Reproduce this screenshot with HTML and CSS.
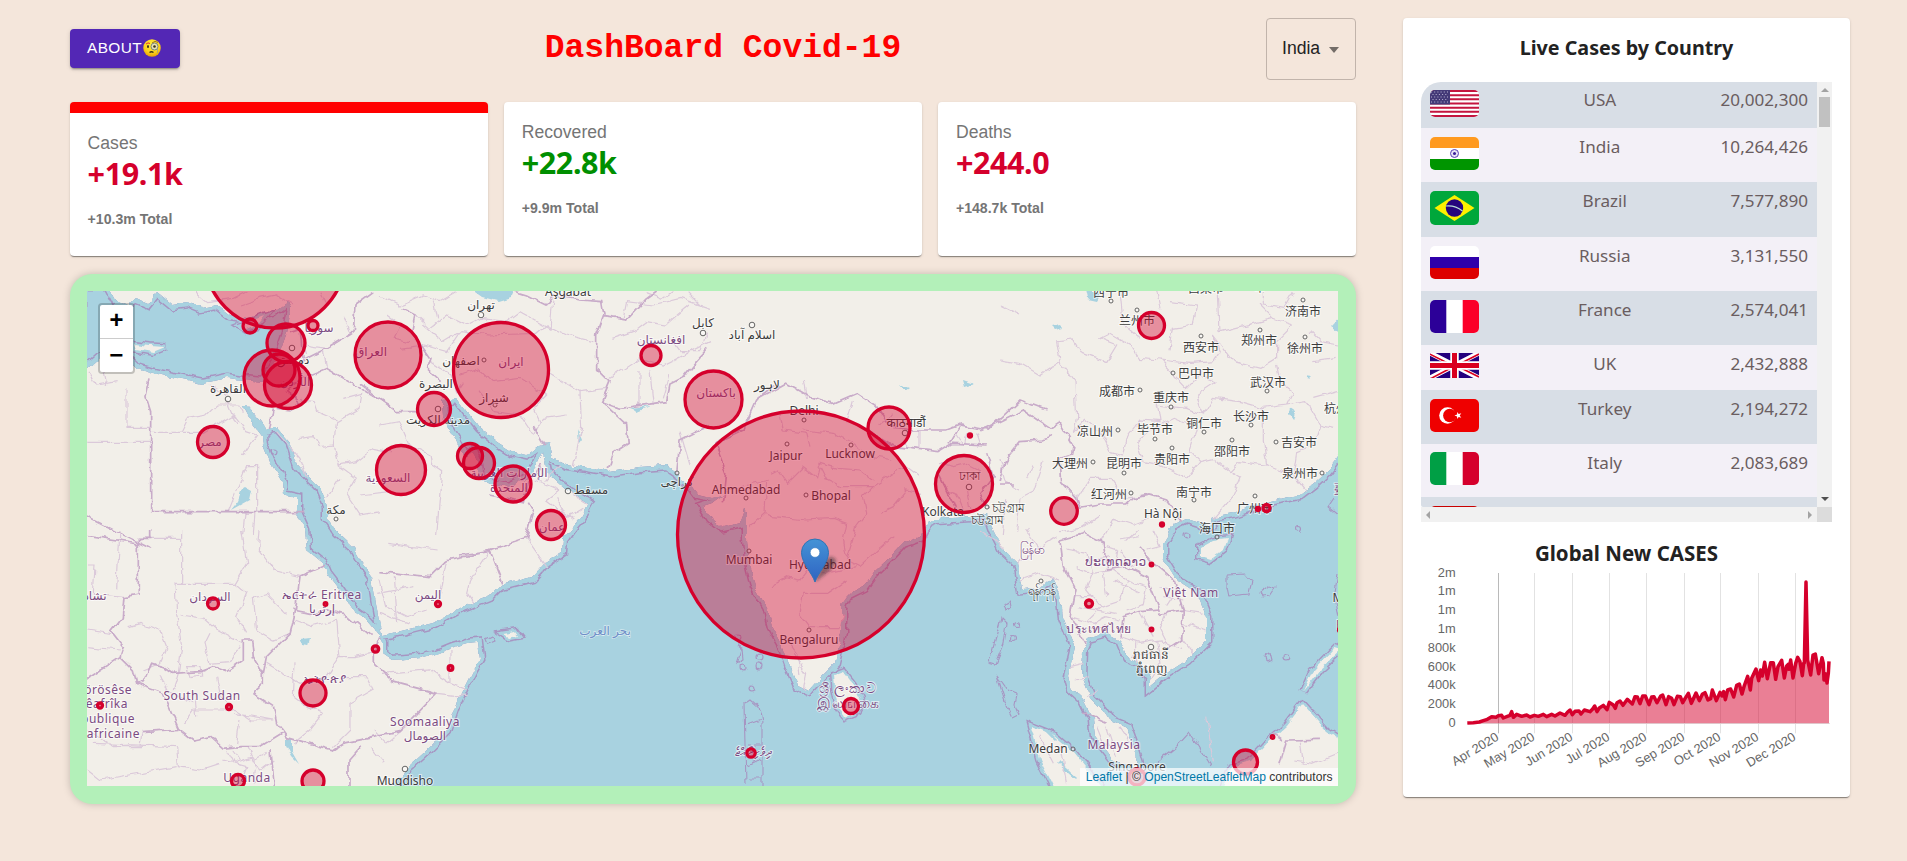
FILE: index.html
```html
<!DOCTYPE html>
<html lang="en">
<head>
<meta charset="utf-8">
<title>DashBoard Covid-19</title>
<link rel="stylesheet" href="styles.css">
</head>
<body>
<div class="app">
  <main class="main">
    <header class="header">
      <button class="about">ABOUT<svg class="emoji" viewBox="0 0 36 36"><defs><radialGradient id="face" cx=".5" cy=".3" r=".75"><stop offset="0" stop-color="#ffee3a"/><stop offset=".6" stop-color="#fcd21c"/><stop offset="1" stop-color="#e59600"/></radialGradient></defs><circle cx="18" cy="18" r="17.5" fill="url(#face)"/><path d="M6 10q4-4 8-1" fill="none" stroke="#e5322d" stroke-width="2"/><path d="M18 8q6-6 12-1" fill="none" stroke="#8a5a10" stroke-width="1.6"/><ellipse cx="10" cy="15" rx="2" ry="3" fill="#3b3018"/><circle cx="23" cy="15" r="7" fill="#e9e4b0" stroke="#6c7a80" stroke-width="1.8"/><circle cx="23" cy="15" r="2.6" fill="#3b3018"/><path d="M29 18v10" stroke="#8b97a0" stroke-width="1.3"/><path d="M13 27q4-3 8 0" fill="none" stroke="#3b3018" stroke-width="2.6"/></svg></button>
      <h1 class="title">DashBoard Covid-19</h1>
      <div class="select"><span>India</span><i class="caret"></i></div>
    </header>
    <section class="stats">
      <article class="stat stat-active"><p class="stat-name">Cases</p><h2 class="stat-value">+19.1k</h2><p class="stat-total">+10.3m Total</p></article>
      <article class="stat"><p class="stat-name">Recovered</p><h2 class="stat-value good">+22.8k</h2><p class="stat-total">+9.9m Total</p></article>
      <article class="stat"><p class="stat-name">Deaths</p><h2 class="stat-value">+244.0</h2><p class="stat-total">+148.7k Total</p></article>
    </section>
    <section class="map-card">
      <div class="map">
        <svg class="map-svg" viewBox="87 291 1251 495">
          <defs>
            <filter id="rough" filterUnits="userSpaceOnUse" x="60" y="270" width="1300" height="540"><feTurbulence type="fractalNoise" baseFrequency=".09" numOctaves="2" seed="4"/><feDisplacementMap in="SourceGraphic" scale="7" xChannelSelector="R" yChannelSelector="G"/></filter>
            <path id="ocean" d="M393 786L407 768 427 750 447 730 455 707 463 690 473 670 480 658 478 642 467 643 453 647 433 655 420 658 393 660 383 653 383 642 378 633 367 620 353 610 340 590 327 573 323 563 307 550 305 530 297 512 297 498 283 495 282 482 270 462 263 445 262 435 252 422 243 405 247 405 260 420 267 430 271 428 278 428 290 442 298 465 310 478 320 488 327 505 327 518 337 532 353 547 360 560 372 577 375 597 380 627 382 635 393 633 413 628 433 623 453 612 460 608 492 595 502 585 532 577 545 563 562 552 563 540 570 530 580 518 588 503 568 491 547 472 543 452 537 465 527 478 507 488 490 484 480 478 478 465 473 452 467 457 460 450 455 438 443 418 442 400 457 398 467 412 480 428 497 442 513 452 527 455 540 445 548 443 552 458 567 465 587 468 610 472 640 467 667 465 677 472 682 482 691 486 697 494 712 497 723 495 712 503 703 506 710 517 722 527 740 523 744 508 747 513 747 540 750 567 755 587 767 607 772 627 783 647 790 667 798 686 808 691 817 681 835 663 842 633 842 607 847 595 863 587 873 573 890 557 903 543 920 537 927 523 937 519 970 517 987 513 993 530 1003 550 1017 563 1022 590 1040 588 1052 577 1060 593 1063 617 1075 647 1068 677 1072 690 1083 700 1093 720 1095 737 1113 760 1127 767 1140 767 1133 743 1127 727 1110 720 1103 710 1090 697 1082 677 1083 650 1088 638 1107 633 1120 640 1127 657 1140 663 1150 677 1150 687 1167 673 1187 660 1207 640 1207 617 1197 593 1177 580 1163 557 1163 543 1172 528 1173 525 1187 518 1200 522 1205 528 1212 526 1211 517 1233 513 1257 505 1283 498 1300 495 1313 485 1327 472 1335 462 1350 440V800H393z"/>
            <path id="med" d="M80 285H108L117 302 128 306 136 298 148 303 157 292 173 305 188 303 200 308 217 305 230 315 247 318 273 312 287 302 291 308 287 332 280 352 273 368 263 382 243 380 227 378 203 383 177 378 153 373 137 368 118 350 100 357 88 368H80z"/>
            <clipPath id="sea"><use href="#ocean"/><use href="#med"/></clipPath>
          </defs>
          <rect x="87" y="291" width="1251" height="495" fill="#f2efe9"/>
          <g filter="url(#rough)">
            <g fill="#a8d2e0"><use href="#ocean"/><use href="#med"/><path d="M465 285H516L511 297 498 301 482 297zM1345 312v24l-14-9zM1085 290l15 4-4 7-9-2zM1052 326l9-2 3 4-8 2zM1290 408l6 4-2 8-5-7zM1305 375l6 1-3 3zM244 486l7 4-2 10-18 10 8-10zM301 640l8-1-2 8-5-1zM286 738h5v14l7 12-7-7-5-10zM962 380l12 4-10 3zM900 384l10 4-4 3zM578 430l4 10-3 4zM630 408l20-2-12 5z"/></g>
            <g clip-path="url(#sea)" fill="none"><g stroke="#a795c2" stroke-width="11"><use href="#ocean"/><use href="#med"/></g><g stroke="#a8d2e0" stroke-width="8"><use href="#ocean"/><use href="#med"/></g></g>
            <g fill="#a8d2e0" stroke="#a795c2" stroke-width="8"><path id="isl" d="M1200 547L1213 540 1227 538 1223 550 1210 560 1200 557zM834 674L842 671 853 685 862 703 855 714 845 718 839 710 835 690zM1031 726L1054 735 1074 752 1090 772 1104 790H1055L1040 760zM1303 704L1326 730 1340 739V790H1222L1230 768 1250 762 1270 740 1287 725zM1342 650L1320 670 1303 692 1312 672 1335 648zM134 344l16 2 15 1-12 5-17-3zM240 326l8-3 16-6-8 10-10 3zM503 634l13-2 3 4-10 2z"/></g>
            <use href="#isl" fill="#a8d2e0" stroke="#a8d2e0" stroke-width="5.2"/><use href="#isl" fill="#f2efe9"/>
            <path d="M1046 730l10 10M1058 762l18 16M1110 697l4 8" stroke="#a8d2e0" stroke-width="3"/>
            <g class="limits">
              <path d="M995 640l6-22 6 6-3 20-8 20-7-2zM997 676l10 14 10 4-2 10 4 10-6 3-8-16zM1005 604l5-3 1 6-4 3zM1228 575l16-1 7 8-3 12-18 2-2-10zM1260 592l10-7 6 2-6 9-8 1zM1155 763l20-16 14-15 9 12 13 22M745 704l6-4 7 6 4 16v65M744 704l2 80M747 725l13-5M747 745h14M747 765l13-6M749 778h12M736 646l6 3 1 10-6 4 4-13zM486 638l6-3 3 5-7 3zM1265 655l4-3 2 8-5 2zM1334 498l-6 9 12 10M1338 575l-4 22 5 24"/>
              <circle cx="1017" cy="624" r="2.5"/><circle cx="1012" cy="639" r="2.5"/><circle cx="742" cy="667" r="3"/><circle cx="759" cy="657" r="3"/><circle cx="759" cy="666" r="3"/><circle cx="751" cy="689" r="3"/><circle cx="1287" cy="658" r="3"/><circle cx="1186" cy="536" r="3"/><circle cx="1299" cy="529" r="2.5"/><circle cx="274" cy="452" r="3"/><circle cx="738" cy="638" r="3"/>
            </g>
            <g class="regions">
              <g transform="translate(60 265) scale(.3333)"><path d="M82 532H270M198 370V487H270M272 502H430L520 450 560 500 590 510 550 570M590 600V738M590 602H560L505 740M555 740L548 810M585 740L580 810M130 310L140 360M90 320L110 360 170 350M360 500L380 460 440 450 470 420 540 420 550 440M450 360L500 390 540 380M500 410L530 480M790 255L800 310M740 270L730 240 800 250M850 150L870 200M715 520L760 515 780 545 820 540 835 600 890 590 940 550 990 560M835 600L890 640 860 690 900 750 960 740M820 540L830 470 900 430 905 385 850 400M720 400L760 410 770 440 830 465M650 500L720 580 740 640M900 690L990 680M800 700L840 640M400 78L440 110 520 100 560 80M540 120L600 100 650 90 700 120M780 80L800 130"/></g>
              <g transform="translate(380 265) scale(.3333)"><path d="M0 90L60 120 130 90 180 110 230 80M105 150L150 190 200 150 260 180 300 160 380 170 420 140 510 190 520 90M60 250L130 240 200 260 240 200 330 210 470 205 500 180 560 210 640 230M240 330L300 310 340 350 420 340 500 390 460 430 480 470M510 325L600 380 605 490 580 600M300 380L340 440 420 450 460 510 490 460 560 450M600 380L680 370M150 290L210 330 230 380 250 350M690 340L780 280 850 300 990 230M780 320V420M810 320L820 420M700 220L760 200 800 170 860 180 930 120M870 330L850 400M730 160L740 110 820 120 900 100 990 130M900 500L930 600M0 480L60 470 90 540 150 570 155 600 185 620 170 810M530 700L560 760 610 730M500 650L540 600M20 150L60 180 40 220 90 230M160 110L170 160M130 180L190 230 240 200M870 220L900 260 960 260 980 200M800 80L850 100 880 78M920 80L960 120"/></g>
              <g transform="translate(660 380) scale(.3333)"><path d="M360 100L370 150 440 160 450 200M330 280L350 270 380 310 430 260 470 290 480 250 530 265 600 270 640 300M320 400L340 410 440 420 520 415 560 430 550 480 560 530M320 300L315 400 270 440M480 260L500 300 540 320 640 320 700 280 740 260 780 290M640 320L610 350 620 400 590 440 560 540 600 560 700 470M330 620L380 590 420 600 450 560 500 580 590 560M430 640L420 700 450 740 540 740 550 700M430 640L500 640 560 600M380 780L410 820 420 880M330 300L200 330M430 150L520 160 580 190 640 230 700 240M780 340L740 330 700 380 660 400M840 250L880 260 920 250 960 270M860 330L890 340 910 390M920 330L930 390M1020 240L1040 310 1080 330M700 100L660 130M430 0L440 60M580 60L560 130M740 150V210M780 150V205M890 165l20 30M920 160l-5 30M950 160l10 30"/></g>
              <g transform="translate(1000 265) scale(.3333)"><path d="M180 290L120 330 60 295 0 285M180 290L170 230 220 225 240 260 320 290 350 240 300 220 330 205 390 240 420 280 480 285 570 295 640 290 660 260 640 210 700 290 780 310 830 280 830 230 880 180 820 160 780 120M660 200L820 160M655 78L660 200M180 290L225 350 230 460 220 500 250 460 300 500 330 560 370 570 385 510 420 465 480 470 470 400M470 420L560 430 610 450 590 390 650 350 600 330 560 370 480 285M610 450L640 400 720 410 790 430 860 420 880 380 840 350 830 300M860 420L920 410 960 480 1000 490M960 480L940 540 890 560 880 630 920 680M790 430L790 520 800 600 720 590 690 620 640 580 600 590 570 560 590 490 520 460 480 480 410 530 430 590 480 600 560 640 600 590M690 620L720 640 700 690 640 760M230 700L270 640 330 640 370 700 460 690M360 78L370 180 420 220M510 110L590 120 580 180 520 190 510 250M790 78V120L850 130 880 78M930 200L960 230 1014 240M940 290L1010 280M940 400L1014 380M0 120L60 150M130 590L100 680 60 700 50 800M20 700L10 810M100 600L80 640M180 800L240 790 300 750M300 830L340 760 400 780 450 760M380 830L420 790M800 600L880 630M470 78L480 130"/></g>
              <g transform="translate(60 530) scale(.3333)"><path d="M365 0V160M235 25H362M345 160H525L560 100 545 0M345 160L350 250 365 350 355 430M365 255L430 265 470 300 545 340M525 160L560 190 530 260 560 310M600 0L595 60 640 120 720 140M580 200L620 190 680 250M580 200L590 300 640 330 690 310M450 310L435 340 450 400 510 395 540 350M705 270L760 290 830 270 840 380 800 440 720 460 620 400M840 380L880 380 930 370M840 440L920 440 940 480 870 520 870 600 820 650M705 400L700 500 740 530 790 550 750 600 700 640M300 430L320 480 400 520M400 540L370 580M470 440L480 490 510 530 570 570 640 570M400 540L480 540 520 540M540 570L530 640M520 550L640 570M405 490L410 560M82 600L160 650 240 650 245 610M100 640L350 650 355 710 420 720 480 700M82 720L120 750 350 710M355 430L340 480M200 290L240 280 300 300 320 350 300 400 250 420M82 300L150 310M82 350L180 360M180 0L170 180M82 105H105L100 190 200 200M1160 90L1140 200M985 40L1130 60M960 150L980 230 1040 260 1100 240M955 190L1060 170M1000 140L1010 280M960 250L1050 280M940 600L980 640 1040 590M930 650L970 700M1130 490L1220 500M1170 360V460L1110 420 960 430M1170 460L1220 480M500 660L520 700 580 680 600 720 640 690M490 690L560 710 540 760M520 660L540 690M560 650L580 690 620 670M590 700L580 760M380 410h40l5 25-35 5z"/></g>
              <g transform="translate(960 530) scale(.3333)"><path d="M320 60L380 70 400 130 380 180 420 230 380 270M350 110L400 130 460 120 500 150 480 210 420 230M460 120L470 60 440 50M500 150L560 170 550 220 500 240M480 60L520 110M560 60L600 50 580 0M540 20L480 30M600 170L640 180M610 200L670 210M660 240L730 250M670 280L740 300M660 320L700 370M620 250L600 300 620 340M480 320L540 340 600 330 660 360M530 340V400M590 330L600 400 570 450M510 380L570 370M330 260L400 280 440 260 480 270M380 300L440 290M330 410L370 400M350 450L390 440M380 500L410 480M410 590L430 640 460 650M440 590L470 680M480 590L520 650M170 100L230 60 290 20M200 0L240 60M180 150L240 130 300 150M60 0L130 50M1000 690L1060 700 1134 670M1020 630L1030 700M740 560L760 700M240 620L280 700M300 650L320 760M390 90L450 80M430 130L440 200M340 200L400 200M350 230L470 250M460 150L540 190M620 230L640 200M540 250L580 320"/></g>
              <g transform="translate(460 480) scale(.3333)"><path d="M200 175L260 260M90 212L30 300 20 340 40 370M300 30L260 60 340 120M330 40L380 70M230 0L300 30M1000 520L1040 580 1030 630"/></g>
            </g>
            <g class="borders">
              <g transform="translate(60 265) scale(.3333)"><path d="M270 340L258 395 272 440V740H505L730 740M82 755L270 850M640 430L628 495M650 430L690 435 720 415 680 380 700 350 800 310 990 420M700 300L790 255 880 200 885 120 940 80M690 200L720 190 730 290"/></g>
              <g transform="translate(380 265) scale(.3333)"><path d="M-60 355L50 440 110 440M65 130L105 150 95 200 150 280 140 310 185 350M180 380L190 400M400 78L440 90 500 120 520 90 600 105 665 110 672 150 650 210 650 310 690 350 665 410 740 480 745 535 700 565 685 615M665 410L720 430 860 410 870 360 910 340 950 290 985 250M672 155L740 165 800 100 830 78M460 480L495 540M330 690L430 710 445 650 485 600"/></g>
              <g transform="translate(660 380) scale(.3333)"><path d="M190 370L200 280 165 190 250 150 290 60 340 20M50 280L60 180 120 150 145 140M290 60L380 10 450 50 520 70 590 40 650 80 690 140 760 150 860 150 900 135 985 150 1080 60 1160 90M620 150L700 200 840 215 880 190 980 195M830 270L880 370 890 400M980 220L1000 290 960 340 985 385M870 190L900 140"/></g>
              <g transform="translate(1000 265) scale(.3333)"><path d="M-60 500L70 435 150 490 180 470 220 540 215 570 180 580 185 650 230 700 240 730 300 720 380 720 400 700 450 690 500 705 550 770M0 650L20 580 60 530 130 525 155 515M0 660H45"/></g>
              <g transform="translate(60 530) scale(.3333)"><path d="M272 0V25H235V192L195 200 190 260 155 305 190 350 180 380 220 420 230 460 250 455 275 400 310 410 340 430 420 425 460 410 500 425 550 390 550 330 575 330 580 380 610 430 610 465 580 490 640 530 650 580 680 620 820 660 850 640 1020 605 1130 490 1000 455 940 400 940 370 960 320M82 445L180 380M230 462L310 490 355 595 400 630 450 620 490 655 540 650 600 650 665 610M245 605L355 598M610 430L620 380 690 310 705 250 720 140 800 105M700 240L750 250 800 240 860 255 935 320M955 125L1110 140 1160 90 1260 70M870 768V690L905 650M82 20L235 42M630 660L640 768"/></g>
              <g transform="translate(460 480) scale(.3333)"><path d="M0 225L90 212 200 175 222 95 205 65M90 212L128 310"/></g>
              <g transform="translate(960 530) scale(.3333)"><path d="M300 30L310 110 345 180 330 260 375 340M300 30L370 10 430 40 440 120 500 110 560 140 600 240 540 245 490 260 480 320M540 50L580 100 640 150 670 240 600 250M670 240L665 330 620 360M370 550L440 580M960 700L980 630 1080 628M940 610l30 20"/></g>
            </g>
          </g>
          <g fill="#fff" fill-opacity=".5" stroke="#565656" stroke-width=".9">
            <circle cx="228" cy="399" r="2.8"/><circle cx="292" cy="348" r="2.8"/><circle cx="481" cy="315" r="2.8"/><circle cx="484" cy="360" r="2"/><circle cx="438" cy="409" r="2.8"/><circle cx="495" cy="405" r="2"/><circle cx="703" cy="333" r="2.8"/><circle cx="752" cy="325" r="2.8"/><circle cx="336" cy="519" r="2"/><circle cx="568" cy="491" r="2.8"/><circle cx="677" cy="473" r="2"/><circle cx="804" cy="420" r="2"/><circle cx="787" cy="444" r="2"/><circle cx="851" cy="445" r="2"/><circle cx="746" cy="498" r="2"/><circle cx="806" cy="495" r="2"/><circle cx="749" cy="551" r="2"/><circle cx="809" cy="630" r="2"/><circle cx="905" cy="433" r="2.8"/><circle cx="969" cy="487" r="2.8"/><circle cx="987" cy="507" r="2"/><circle cx="405" cy="769" r="2.8"/><circle cx="1041" cy="581" r="2"/><circle cx="1151" cy="647" r="2.8"/><circle cx="1073" cy="749" r="2"/><circle cx="1111" cy="301" r="2"/><circle cx="1137" cy="310" r="2"/><circle cx="1201" cy="336" r="2"/><circle cx="1260" cy="330" r="2"/><circle cx="1303" cy="300" r="2"/><circle cx="1305" cy="337" r="2"/><circle cx="1173" cy="373" r="2"/><circle cx="1140" cy="390" r="2"/><circle cx="1171" cy="407" r="2"/><circle cx="1267" cy="391" r="2"/><circle cx="1251" cy="425" r="2"/><circle cx="1204" cy="432" r="2"/><circle cx="1118" cy="430" r="2"/><circle cx="1155" cy="439" r="2"/><circle cx="1172" cy="448" r="2"/><circle cx="1232" cy="440" r="2"/><circle cx="1276" cy="442" r="2"/><circle cx="1093" cy="462" r="2"/><circle cx="1124" cy="473" r="2"/><circle cx="1322" cy="473" r="2"/><circle cx="1131" cy="493" r="2"/><circle cx="1194" cy="500" r="2"/><circle cx="1255" cy="496" r="2"/><circle cx="1217" cy="537" r="2"/>
          </g>
          <g class="city">
            <text x="228" y="393">القاهرة</text><text x="293" y="364">دمشق</text><text x="336" y="514">مكة</text><text x="481" y="309">تهران</text><text x="568" y="296">Aşgabat</text><text x="461" y="365">اصفهان</text><text x="494" y="402">شیراز</text><text x="436" y="388">البصرة</text><text x="438" y="424">مدينة الكويت</text><text x="703" y="327">کابل</text><text x="752" y="339">اسلام آباد</text><text x="767" y="389">لاہور</text><text x="591" y="494">مسقط</text><text x="677" y="486">کراچی</text>
            <text x="804" y="415">Delhi</text><text x="786" y="460">Jaipur</text><text x="850" y="458">Lucknow</text><text x="746" y="494">Ahmedabad</text><text x="831" y="500">Bhopal</text><text x="749" y="564">Mumbai</text><text x="820" y="569">Hyderabad</text><text x="809" y="644">Bengaluru</text><text x="906" y="427">काठमाडौं</text><text x="969" y="480">ঢাকা</text><text x="943" y="516">Kolkata</text><text x="987" y="524">চট্টগ্রাম</text><text x="1008" y="512">চট্টগ্রাম</text>
            <text x="1111" y="297">西宁市</text><text x="1137" y="325">兰州市</text><text x="1201" y="352">西安市</text><text x="1259" y="345">郑州市</text><text x="1303" y="316">济南市</text><text x="1305" y="353">徐州市</text><text x="1206" y="293">吕梁市</text><text x="1260" y="292">市</text><text x="1196" y="378">巴中市</text><text x="1117" y="396">成都市</text><text x="1171" y="402">重庆市</text><text x="1268" y="387">武汉市</text><text x="1251" y="421">长沙市</text><text x="1204" y="428">铜仁市</text><text x="1342" y="413">杭州市</text><text x="1095" y="436">凉山州</text><text x="1155" y="434">毕节市</text><text x="1172" y="464">贵阳市</text><text x="1232" y="456">邵阳市</text><text x="1299" y="447">吉安市</text><text x="1070" y="468">大理州</text><text x="1124" y="468">昆明市</text><text x="1300" y="478">泉州市</text><text x="1109" y="499">红河州</text><text x="1194" y="497">南宁市</text><text x="1255" y="513">广州市</text><text x="1163" y="518">Hà Nội</text><text x="1217" y="533">海口市</text>
            <text x="1041" y="595">ရန်ကုန်</text><text x="1151" y="659">រាជធានី</text><text x="1151" y="673">ភ្នំពេញ</text><text x="1048" y="753">Medan</text><text x="1137" y="771">Singapore</text><text x="405" y="785">Muqdisho</text><text x="1338" y="602">M</text>
          </g>
          <g class="nation">
            <text x="319" y="332">سوريا</text><text x="295" y="386">الأردن</text><text x="371" y="356">العراق</text><text x="210" y="446">مصر</text><text x="388" y="482">السعودية</text><text x="511" y="366">ایران</text><text x="661" y="344">افغانستان</text><text x="716" y="397">باكستان</text><text x="509" y="477">الإمارات العربية</text><text x="509" y="492">المتحدة</text><text x="552" y="531">عمان</text><text x="210" y="601">السودان</text><text x="95" y="600">تشاد</text><text x="322" y="599">ኤርትራ Eritrea</text><text x="322" y="613">إرتريا</text><text x="428" y="599">اليمن</text><text x="325" y="683">ኢትዮጵያ</text><text x="202" y="700">South Sudan</text><text x="247" y="782">Uganda</text><text x="425" y="726">Soomaaliya</text><text x="425" y="740">الصومال</text><text x="1032" y="554">မြန်မာ</text><text x="1116" y="566">ປະເທດລາວ</text><text x="1099" y="633">ประเทศไทย</text><text x="1191" y="597">Việt Nam</text><text x="1114" y="749">Malaysia</text><text class="wide" x="848" y="693">ශ්‍රී ලංකාව</text><text class="wide" x="848" y="708">இலங்கை</text><text x="753" y="756">ދިވެހިރާއްޖެ</text><text x="1340" y="494">臺</text><text x="1340" y="629">P</text>
            <g class="end"><text x="132" y="694">Ködörösêse</text><text x="128" y="708">tî Bêafrîka</text><text x="135" y="723">République</text><text x="140" y="738">centrafricaine</text></g>
          </g>
          <text class="water" x="605" y="635">بحر العرب</text>
          <g class="bubbles">
            <circle cx="275" cy="258" r="70"/><circle cx="250" cy="326" r="7"/><circle cx="313" cy="325.500" r="5"/><circle cx="286" cy="343" r="19"/><circle cx="272" cy="378" r="28"/><circle cx="279" cy="370" r="16"/><circle cx="288" cy="385" r="23.500"/><circle cx="213" cy="442" r="15.500"/><circle cx="388" cy="355" r="33"/><circle cx="501" cy="370" r="47.500"/><circle cx="434" cy="409" r="16.500"/><circle cx="401" cy="470" r="24.500"/><circle cx="470" cy="456" r="12.500"/><circle cx="479" cy="463" r="15.500"/><circle cx="513" cy="484" r="18"/><circle cx="551" cy="525" r="14.500"/><circle cx="651" cy="355.500" r="10"/><circle cx="713.500" cy="399.500" r="28.500"/><circle cx="801" cy="534.500" r="123.500"/><circle cx="889" cy="428" r="21"/><circle cx="970" cy="435.500" r="1.500"/><circle cx="964" cy="484" r="28.500"/><circle cx="1151.500" cy="325.500" r="13"/><circle cx="1064" cy="511" r="13.300"/><circle cx="1162" cy="524.500" r="1.500"/><circle cx="1258" cy="509" r="1.500"/><circle cx="1266.500" cy="508" r="3.500"/><circle cx="213" cy="603.500" r="5.500"/><circle cx="325.500" cy="604" r="1.300"/><circle cx="438" cy="604" r="2.500"/><circle cx="375.500" cy="649" r="3.200"/><circle cx="450.500" cy="668" r="2.300"/><circle cx="313" cy="693" r="13"/><circle cx="229" cy="707" r="2.500"/><circle cx="100" cy="705.500" r="2.500"/><circle cx="238" cy="781" r="6.500"/><circle cx="313" cy="781" r="11"/><circle cx="1151.500" cy="564.500" r="1.300"/><circle cx="1089" cy="603.500" r="3.500"/><circle cx="1151.500" cy="629.500" r="1.300"/><circle cx="1272.500" cy="737" r="1.300"/><circle cx="1245.500" cy="762" r="12"/><circle cx="1137" cy="777" r="8"/><circle cx="851" cy="706" r="7.500"/><circle cx="751" cy="753" r="4.200"/><circle cx="1340" cy="630" r="1.500"/>
          </g>
          <defs><linearGradient id="pin" x2="0" y2="1"><stop offset="0" stop-color="#4493d6"/><stop offset="1" stop-color="#2f63c2"/></linearGradient><filter id="blur"><feGaussianBlur stdDeviation="1.6"/></filter></defs>
          <path d="M815 582L824 561Q832 553 836 560Q837 567 815 582z" fill="#222" fill-opacity=".45" filter="url(#blur)"/>
          <path d="M815 582C812 573 801.500 563 801.500 552.500A13.500 13.500 0 0 1 828.500 552.500C828.500 563 818 573 815 582z" fill="url(#pin)" stroke="#2f74b5"/>
          <circle cx="815" cy="552.500" r="4.800" fill="#fff" stroke="#3a7cc0" stroke-width=".6"/>
        </svg>
        <div class="zoom"><span>+</span><span>−</span></div>
        <div class="credit"><a>Leaflet</a> | © <a>OpenStreetLeafletMap</a> contributors</div>
      </div>
    </section>
  </main>
  <aside class="side">
    <h3 class="side-title">Live Cases by Country</h3>
    <div class="table">
      <div class="rows">
        <div class="row h46"><svg class="flag" style="height:27px" viewBox="0 0 49 27" preserveAspectRatio="none"><rect width="49" height="27" fill="#fff"/><path d="M0 1h49M0 5.200h49M0 9.300h49M0 13.500h49M0 17.700h49M0 21.800h49M0 26h49" stroke="#c4153f" stroke-width="2.100"/><rect width="20" height="14.500" fill="#443a78"/><path d="M1 2h18M2.500 4.500h16M1 7h18M2.500 9.500h16M1 12h18" stroke="#b9b4d2" stroke-width="1" stroke-dasharray="1 2.200"/></svg><span>USA</span><b>20,002,300</b></div>
        <div class="row h54"><svg class="flag" style="height:33px" viewBox="0 0 49 33"><rect width="49" height="33" fill="#fff"/><path fill="#ff9a1f" d="M0 0h49v11H0z"/><path fill="#009500" d="M0 22h49v11H0z"/><circle cx="24.500" cy="16.500" r="4" fill="#e8e3f6" stroke="#5b3fb5"/><circle cx="24.500" cy="16.500" r="1.500" fill="#3a1e9a"/></svg><span>India</span><b>10,264,426</b></div>
        <div class="row h55"><svg class="flag" style="height:34px" viewBox="0 0 49 34"><rect width="49" height="34" fill="#00a73b"/><path fill="#fdf000" d="M4.500 17l20-13 20 13-20 13z"/><circle cx="24.500" cy="17" r="8.700" fill="#25057d"/><path d="M16 15q9-1 16.500 5" fill="none" stroke="#b9dfd8" stroke-width="1.200"/></svg><span>Brazil</span><b>7,577,890</b></div>
        <div class="row h54"><svg class="flag" style="height:33px" viewBox="0 0 49 33"><rect width="49" height="33" fill="#fff"/><path fill="#2f00ab" d="M0 11h49v11H0z"/><path fill="#dd0000" d="M0 22h49v11H0z"/></svg><span>Russia</span><b>3,131,550</b></div>
        <div class="row h54"><svg class="flag" style="height:33px" viewBox="0 0 49 33"><rect width="49" height="33" fill="#fff"/><path fill="#2c0098" d="M0 0h16.300v33H0z"/><path fill="#fb0028" d="M32.700 0H49v33H32.700z"/></svg><span>France</span><b>2,574,041</b></div>
        <div class="row h45"><svg class="flag square" style="height:25px" viewBox="0 0 49 25"><rect width="49" height="25" fill="#24007d"/><path d="M0 0l49 25M49 0L0 25" stroke="#fff" stroke-width="5"/><path d="M0 1.200l20 10M49 1L29 11.200M0 26l20-10.500M49 24L29 14" stroke="#d9001f" stroke-width="1.600"/><path d="M24.500 0v25M0 12.500h49" stroke="#fff" stroke-width="8.500"/><path d="M24.500 0v25M0 12.500h49" stroke="#d9001f" stroke-width="5"/></svg><span>UK</span><b>2,432,888</b></div>
        <div class="row h54"><svg class="flag" style="height:33px" viewBox="0 0 49 33"><rect width="49" height="33" fill="#ef0000"/><circle cx="17.500" cy="16.500" r="8.300" fill="#fff"/><circle cx="19.800" cy="16.500" r="6.700" fill="#ef0000"/><path fill="#fff" d="M24.500 16.500l2.600-.9V13l1.600 2.100 2.600-.9-1.600 2.300 1.600 2.300-2.600-.9-1.600 2.100v-2.600z"/></svg><span>Turkey</span><b>2,194,272</b></div>
        <div class="row h53"><svg class="flag" style="height:33px" viewBox="0 0 49 33"><rect width="49" height="33" fill="#fff"/><path fill="#009f45" d="M0 0h16.300v33H0z"/><path fill="#d5002c" d="M32.700 0H49v33H32.700z"/></svg><span>Italy</span><b>2,083,689</b></div>
        <div class="row h54"><svg class="flag" style="height:33px" viewBox="0 0 49 33"><rect width="49" height="33" fill="#c80000"/></svg></div>
      </div>
      <div class="vbar"><i class="up"></i><i class="thumb"></i><i class="down"></i></div>
      <div class="hbar"><i class="left"></i><i class="right"></i></div>
      <div class="corner"></div>
    </div>
    <h3 class="chart-title">Global New CASES</h3>
    <svg class="chart" viewBox="93 141 1236 621">
      <g stroke="#e2e2e2" stroke-width="3"><path d="M433.500 159V640M547.500 159V640M658.500 159V640M769.500 159V640M883.500 159V640M991.500 159V640M1105.500 159V640M1216.500 159V640M232 610.500H1320"/><path d="M325.500 159V640" stroke="#bababa"/></g>
      <path id="curve" d="M232 609L250 608 268 606 280 602 292 598 305 590 318 592 325 587 335 586 340 594 350 590 360 586 365 575 370 592 380 583 395 589 410 585 420 591 433 586 445 589 460 583 470 590 485 583 495 588 510 579 525 586 533 576 540 570 547 584 555 574 567 573 573 582 583 570 600 575 608 567 614 558 621 575 628 564 640 556 651 569 658 547 670 555 676 565 681 548 690 543 699 556 712 538 727 552 735 530 742 531 750 551 758 528 766 528 777 554 785 531 792 530 801 548 812 528 818 525 828 554 836 530 845 535 852 554 862 529 871 530 878 548 885 536 895 520 904 550 918 519 928 542 937 523 945 518 954 540 962 536 967 510 979 542 990 517 996 528 1001 515 1006 539 1013 510 1022 507 1031 531 1040 496 1048 492 1056 522 1062 500 1073 469 1081 510 1085 475 1098 447 1106 482 1112 450 1117 468 1124 427 1132 476 1142 428 1150 428 1157 478 1164 440 1175 421 1183 474 1190 438 1196 432 1197 448 1202 420 1209 474 1217 430 1223 412 1230 425 1237 467 1241 430 1243 428 1248 186 1253 420 1262 465 1269 405 1276 402 1286 461 1296 413 1300 430 1302 480 1307 462 1311 489 1315 460 1317 424V610H232z" fill="#d5002c" fill-opacity=".5"/>
      <path d="M232 609L250 608 268 606 280 602 292 598 305 590 318 592 325 587 335 586 340 594 350 590 360 586 365 575 370 592 380 583 395 589 410 585 420 591 433 586 445 589 460 583 470 590 485 583 495 588 510 579 525 586 533 576 540 570 547 584 555 574 567 573 573 582 583 570 600 575 608 567 614 558 621 575 628 564 640 556 651 569 658 547 670 555 676 565 681 548 690 543 699 556 712 538 727 552 735 530 742 531 750 551 758 528 766 528 777 554 785 531 792 530 801 548 812 528 818 525 828 554 836 530 845 535 852 554 862 529 871 530 878 548 885 536 895 520 904 550 918 519 928 542 937 523 945 518 954 540 962 536 967 510 979 542 990 517 996 528 1001 515 1006 539 1013 510 1022 507 1031 531 1040 496 1048 492 1056 522 1062 500 1073 469 1081 510 1085 475 1098 447 1106 482 1112 450 1117 468 1124 427 1132 476 1142 428 1150 428 1157 478 1164 440 1175 421 1183 474 1190 438 1196 432 1197 448 1202 420 1209 474 1217 430 1223 412 1230 425 1237 467 1241 430 1243 428 1248 186 1253 420 1262 465 1269 405 1276 402 1286 461 1296 413 1300 430 1302 480 1307 462 1311 489 1315 460 1317 424" fill="none" stroke="#d5002c" stroke-width="10.500" stroke-linejoin="round"/>
      <g class="axis"><text x="197" y="170">2m</text><text x="197" y="225">1m</text><text x="197" y="281">1m</text><text x="197" y="338">1m</text><text x="197" y="395">800k</text><text x="197" y="452">600k</text><text x="197" y="507">400k</text><text x="197" y="563">200k</text><text x="197" y="620">0</text>
        <text transform="translate(329 658) rotate(-31)">Apr 2020</text><text transform="translate(437 658) rotate(-31)">May 2020</text><text transform="translate(551 658) rotate(-31)">Jun 2020</text><text transform="translate(662 658) rotate(-31)">Jul 2020</text><text transform="translate(773 658) rotate(-31)">Aug 2020</text><text transform="translate(887 658) rotate(-31)">Sep 2020</text><text transform="translate(995 658) rotate(-31)">Oct 2020</text><text transform="translate(1109 658) rotate(-31)">Nov 2020</text><text transform="translate(1220 658) rotate(-31)">Dec 2020</text></g>
    </svg>
  </aside>
</div>
</body>
</html>
```
FILE: styles.css
```css
* { box-sizing: border-box; }
body { margin: 0; background: #f4e6db; font-family: "Liberation Sans", Arial, sans-serif; height: 861px; overflow: hidden; }
h1, h2, h3, p { margin: 0; }
.app { display: flex; justify-content: space-between; align-items: flex-start; width: 1780px; margin-left: 70px; padding-top: 18px; }
.main { width: 1286px; }

.header { display: flex; align-items: center; justify-content: space-between; height: 62px; }
.about { display: flex; align-items: center; width: 110px; height: 39px; margin-bottom: 2px; padding: 0 17px; border: 0; border-radius: 4px; background: #5327b5; color: #fff; font: 15.4px "Liberation Sans", Arial, sans-serif; letter-spacing: .4px; box-shadow: 0 3px 1px -2px rgba(0,0,0,.2), 0 2px 2px rgba(0,0,0,.14), 0 1px 5px rgba(0,0,0,.12); }
.emoji { width: 18px; height: 18px; flex: none; margin-left: 1px; }
.title { font: bold 33px/40px "Liberation Mono", monospace; color: #f00; }
.select { display: flex; align-items: center; gap: 9px; width: 90px; height: 62px; padding: 0 0 2px 15px; border: 1px solid #c1b4ab; border-radius: 4px; font-size: 17.6px; color: #222; }
.caret { border: 5.500px solid transparent; border-top: 6px solid #736c67; border-bottom: 0; margin-top: 3px; }

.stats { display: grid; grid-template-columns: repeat(3, 1fr); gap: 16.500px; margin-top: 22px; }
.stat { height: 154px; padding: 18px 17.6px; background: #fff; border-radius: 4px; box-shadow: 0 2px 1px -1px rgba(0,0,0,.3), 0 1px 1px rgba(0,0,0,.14), 0 1px 3px rgba(0,0,0,.12); }
.stat-active { border-top: 11px solid #f00; }
.stat-name { font-size: 17.6px; line-height: 25px; color: #757575; }
.stat-value { font: bold 30.500px/35px "Noto Sans", sans-serif; letter-spacing: -.4px; color: #d5002c; }
.stat-value.good { color: #008f00; }
.stat-total { font-size: 14.1px; font-weight: bold; line-height: 20px; color: #757575; margin-top: 18px; }

.map-card { height: 530px; margin-top: 18px; padding: 17px 18px 18px 17px; background: #b3f0b9; border-radius: 22px; box-shadow: 0 0 8px -1px rgba(0,0,0,.25); }
.map { position: relative; height: 495px; overflow: hidden; }
.map-svg { display: block; width: 100%; height: 100%; font-family: "Noto Sans", "Noto Sans CJK SC", "DejaVu Sans", sans-serif; }
.limits, .regions, .borders { fill: none; }
.limits { stroke: #a795c2; stroke-width: 1.1; }
.regions path { stroke: #dbc9da; stroke-width: 1.2; vector-effect: non-scaling-stroke; }
.borders path { stroke: #c8abc9; stroke-width: 1.7; vector-effect: non-scaling-stroke; }
.city, .nation { font-size: 12px; text-anchor: middle; fill: #3c3c3c; stroke: rgba(255,255,255,.6); stroke-width: 2px; paint-order: stroke; }
.nation { fill: #7c4b82; letter-spacing: .5px; }
.wide { font-size: 13.500px; }
.end { text-anchor: end; }
.water { font-size: 12px; text-anchor: middle; fill: #6f8fc8; stroke: rgba(255,255,255,.5); stroke-width: 1.500px; paint-order: stroke; }
.bubbles { fill: #d5002c; fill-opacity: .4; stroke: #d5002c; stroke-width: 3.300; }
.zoom { position: absolute; left: 11px; top: 12px; width: 37px; height: 71px; border: 2px solid rgba(0,0,0,.2); border-radius: 4px; background: #fff; background-clip: padding-box; }
.zoom span { display: block; height: 34px; text-align: center; font: bold 24px/33px "Liberation Mono", monospace; color: #000; }
.zoom span:first-child { border-bottom: 1px solid #ccc; }
.zoom span:last-child { padding-top: 1px; }
.credit { position: absolute; right: 0; bottom: 0; height: 18px; padding: 0 5.500px; background: rgba(255,255,255,.7); font-size: 12.1px; line-height: 18px; color: #333; white-space: nowrap; }
.credit a { color: #0078a8; }

.side { width: 447px; height: 779px; padding: 0 18px; background: #fff; border-radius: 4px; box-shadow: 0 2px 1px -1px rgba(0,0,0,.3), 0 1px 1px rgba(0,0,0,.14), 0 1px 3px rgba(0,0,0,.12); }
.side-title, .chart-title { font: bold 19.7px/28px "Noto Sans", sans-serif; color: #222; text-align: center; white-space: nowrap; }
.side-title { padding: 16px 0 20px; }
.table { display: grid; grid-template: 425px 15px / 396px 15px; width: 411px; }
.rows { overflow: hidden; border-radius: 20px 0 0 2px; }
.row { display: flex; justify-content: space-between; align-items: flex-start; padding: 8px 9px 0; background: #f3f0f7; color: #6a5d60; font: 17.1px/26px "Noto Sans", sans-serif; }
.row:nth-child(odd) { background: #d8dee6; }
.row b { font-weight: 400; }
.row span, .row b { margin-top: -2px; }
.h45 { height: 45px; } .h46 { height: 46px; } .h53 { height: 53px; } .h54 { height: 54px; } .h55 { height: 55px; }
.row.h46 span, .row.h46 b { margin-top: -3px; }
.flag { width: 49px; border-radius: 5px; margin-top: 1px; }
.flag.square { border-radius: 1px; }
.h46 .flag, .h45 .flag, .h53 .flag { margin-top: 0; }
.vbar { display: flex; flex-direction: column; align-items: center; background: #f1f1f1; }
.vbar i, .hbar i { border: 4px solid transparent; }
.up { border-top: 0 !important; border-bottom-color: #a3a3a3 !important; margin-top: 6px; }
.vbar .thumb { width: 11px; height: 30px; margin-top: 5px; border: 0; background: #c1c1c1; }
.down { border-bottom: 0 !important; border-top-color: #505050 !important; margin: auto 0 6px; }
.hbar { display: flex; align-items: center; justify-content: space-between; padding: 0 5px; background: #f1f1f1; }
.left { border-left: 0 !important; border-right-color: #a3a3a3 !important; }
.right { border-right: 0 !important; border-left-color: #a3a3a3 !important; }
.corner { background: #dcdcdc; }
.chart-title { margin-top: 17px; font-size: 20.500px; }
.chart { display: block; width: 412px; height: 207px; }
.axis { font-size: 38.500px; fill: #666; text-anchor: end; }
```
